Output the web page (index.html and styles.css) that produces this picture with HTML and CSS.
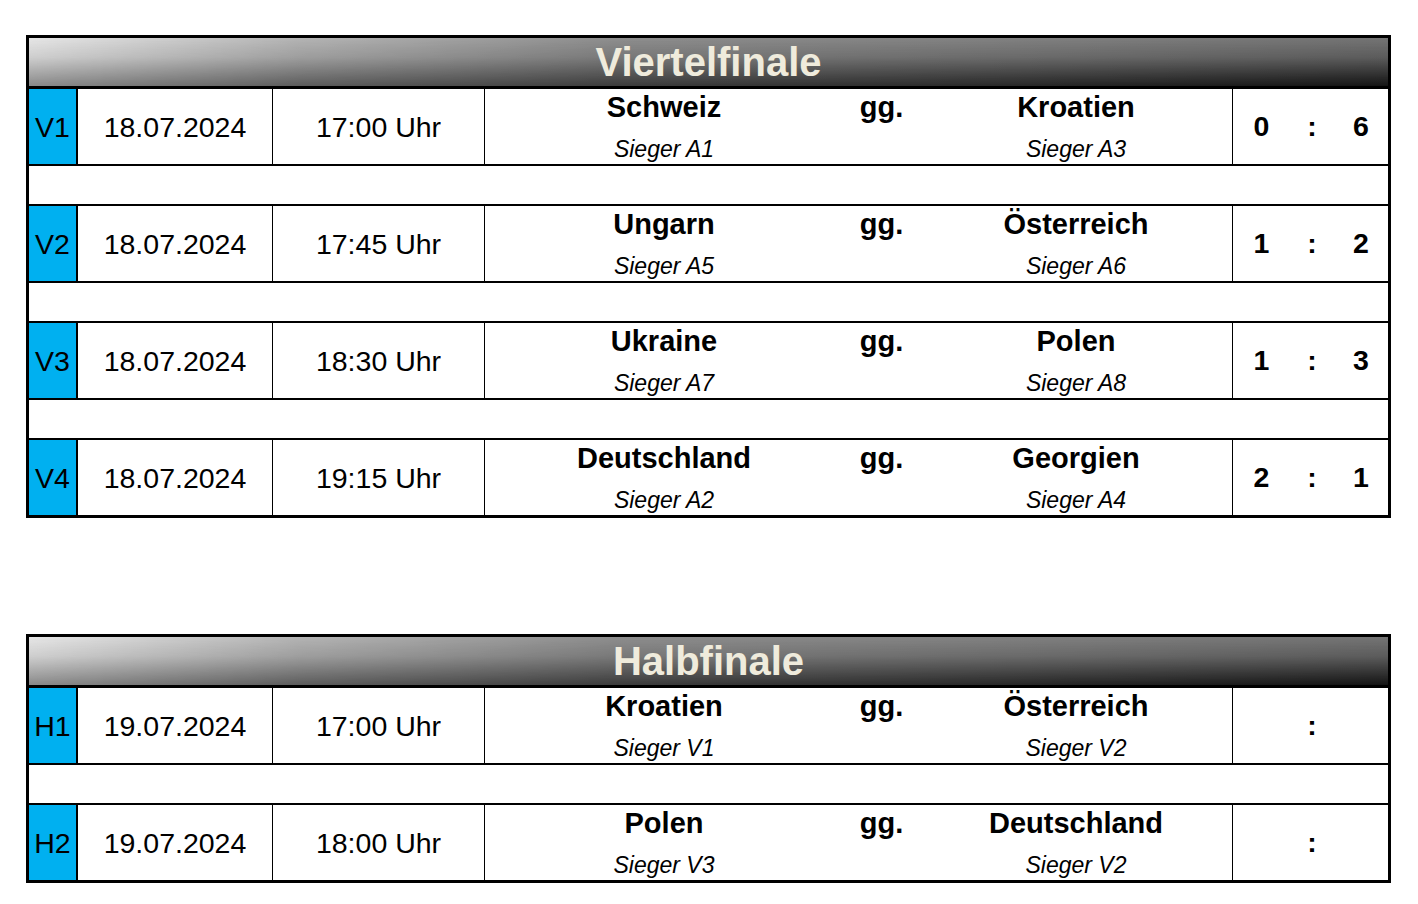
FILE: index.html
```html
<!DOCTYPE html>
<html lang="de">
<head>
<meta charset="utf-8">
<title>Viertelfinale / Halbfinale</title>
<link rel="stylesheet" href="styles.css">
</head>
<body>
<section class="stage">
  <div class="stage-head"><span>Viertelfinale</span></div>

  <div class="match">
    <div class="m-id">V1</div>
    <div class="m-date">18.07.2024</div>
    <div class="m-time">17:00 Uhr</div>
    <div class="m-teams">
      <div class="team"><div class="t-name">Schweiz</div><div class="t-seed">Sieger A1</div></div>
      <div class="vs">gg.</div>
      <div class="team"><div class="t-name">Kroatien</div><div class="t-seed">Sieger A3</div></div>
    </div>
    <div class="m-score"><span>0</span><span>:</span><span>6</span></div>
  </div>
  <div class="spacer"></div>

  <div class="match">
    <div class="m-id">V2</div>
    <div class="m-date">18.07.2024</div>
    <div class="m-time">17:45 Uhr</div>
    <div class="m-teams">
      <div class="team"><div class="t-name">Ungarn</div><div class="t-seed">Sieger A5</div></div>
      <div class="vs">gg.</div>
      <div class="team"><div class="t-name">Österreich</div><div class="t-seed">Sieger A6</div></div>
    </div>
    <div class="m-score"><span>1</span><span>:</span><span>2</span></div>
  </div>
  <div class="spacer"></div>

  <div class="match">
    <div class="m-id">V3</div>
    <div class="m-date">18.07.2024</div>
    <div class="m-time">18:30 Uhr</div>
    <div class="m-teams">
      <div class="team"><div class="t-name">Ukraine</div><div class="t-seed">Sieger A7</div></div>
      <div class="vs">gg.</div>
      <div class="team"><div class="t-name">Polen</div><div class="t-seed">Sieger A8</div></div>
    </div>
    <div class="m-score"><span>1</span><span>:</span><span>3</span></div>
  </div>
  <div class="spacer"></div>

  <div class="match last">
    <div class="m-id">V4</div>
    <div class="m-date">18.07.2024</div>
    <div class="m-time">19:15 Uhr</div>
    <div class="m-teams">
      <div class="team"><div class="t-name">Deutschland</div><div class="t-seed">Sieger A2</div></div>
      <div class="vs">gg.</div>
      <div class="team"><div class="t-name">Georgien</div><div class="t-seed">Sieger A4</div></div>
    </div>
    <div class="m-score"><span>2</span><span>:</span><span>1</span></div>
  </div>
</section>

<section class="stage stage-second">
  <div class="stage-head"><span>Halbfinale</span></div>

  <div class="match">
    <div class="m-id">H1</div>
    <div class="m-date">19.07.2024</div>
    <div class="m-time">17:00 Uhr</div>
    <div class="m-teams">
      <div class="team"><div class="t-name">Kroatien</div><div class="t-seed">Sieger V1</div></div>
      <div class="vs">gg.</div>
      <div class="team"><div class="t-name">Österreich</div><div class="t-seed">Sieger V2</div></div>
    </div>
    <div class="m-score"><span></span><span>:</span><span></span></div>
  </div>
  <div class="spacer"></div>

  <div class="match last">
    <div class="m-id">H2</div>
    <div class="m-date">19.07.2024</div>
    <div class="m-time">18:00 Uhr</div>
    <div class="m-teams">
      <div class="team"><div class="t-name">Polen</div><div class="t-seed">Sieger V3</div></div>
      <div class="vs">gg.</div>
      <div class="team"><div class="t-name">Deutschland</div><div class="t-seed">Sieger V2</div></div>
    </div>
    <div class="m-score"><span></span><span>:</span><span></span></div>
  </div>
</section>
</body>
</html>
```
FILE: styles.css
```css
* { box-sizing: border-box; }

html, body {
  margin: 0;
  background: #ffffff;
}

body {
  padding: 35px 0 0 26px;
  font-family: "Liberation Sans", Arial, sans-serif;
  color: #000;
}

.stage {
  width: 1365px;
  border: 3px solid #000;
  background: #fff;
}

.stage-second {
  margin-top: 116px;
}

.stage-head {
  position: relative;
  height: 51px;
  border-bottom: 3px solid #000;
  background: linear-gradient(to right, #8a8a8a 0%, #5c5c5c 20%, #3c3c3c 43%, #262626 75%, #141414 100%);
  text-align: center;
  overflow: hidden;
}

.stage-head::before {
  content: "";
  position: absolute;
  inset: 0;
  background: linear-gradient(to right, #e6e6e6 0%, #b4b4b4 20%, #8e8e8e 43%, #808080 75%, #747474 100%);
  -webkit-mask-image: linear-gradient(to bottom, #000 0%, rgba(0,0,0,0.75) 40%, rgba(0,0,0,0) 100%);
  mask-image: linear-gradient(to bottom, #000 0%, rgba(0,0,0,0.75) 40%, rgba(0,0,0,0) 100%);
}

.stage-head span {
  position: relative;
  display: block;
  font-size: 40px;
  line-height: 49px;
  font-weight: bold;
  color: #efebdc;
}

.match {
  display: grid;
  grid-template-columns: 49px 195px 212px 748px 155px;
  height: 77px;
  border-bottom: 2px solid #000;
}

.match.last {
  height: 75px;
  border-bottom: 0;
}

.m-id,
.m-date,
.m-time {
  display: flex;
  align-items: center;
  justify-content: center;
  padding-top: 1px;
  font-size: 28.5px;
  border-right: 1px solid #000;
}

.m-id {
  background: #00b0f0;
  border-right-width: 2px;
}

.m-teams {
  display: grid;
  grid-template-columns: 358px 77px 312px;
  border-right: 1px solid #000;
}

.team {
  display: flex;
  flex-direction: column;
  align-items: center;
  padding-top: 2px;
}

.t-name,
.vs {
  font-size: 29px;
  line-height: 32px;
  font-weight: bold;
}

.vs {
  text-align: center;
  padding-top: 2px;
}

.t-seed {
  margin-top: 13px;
  font-size: 23px;
  line-height: 27px;
  font-style: italic;
}

.m-score {
  display: grid;
  grid-template-columns: 57px 44px 54px;
  align-items: center;
  padding-top: 0;
  font-size: 28.5px;
  font-weight: bold;
  text-align: center;
}

.spacer {
  height: 40px;
  border-bottom: 2px solid #000;
}
```
